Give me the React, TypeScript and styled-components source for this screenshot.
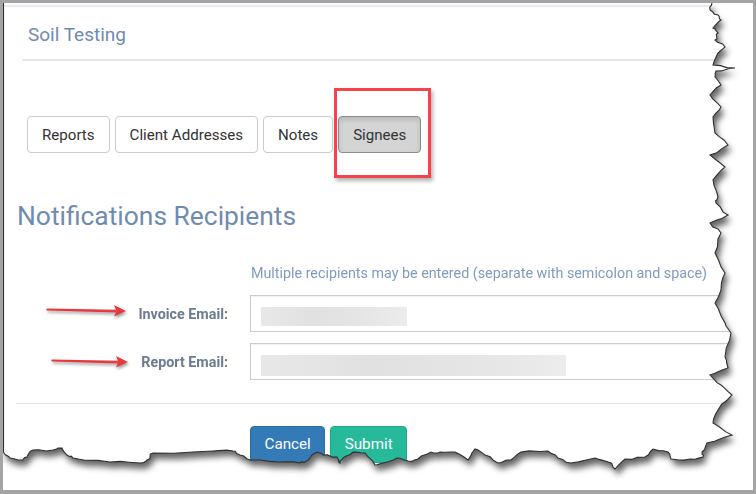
import React from "react";
import styled, { createGlobalStyle } from "styled-components";

// torn edge of the snapshot, in page coordinates (frame border already removed)
const EDGE_RAW: [number, number][] = [
  [712, 3], [710, 10], [718, 15], [721, 20], [713, 28], [718, 33], [715, 40],
  [725, 47], [718, 53], [713, 65], [735, 68], [716, 71], [715, 77], [721, 85],
  [710, 95], [721, 107], [713, 117], [715, 133], [728, 145], [710, 155],
  [725, 167], [713, 180], [718, 197], [716, 203], [728, 215], [710, 223],
  [721, 233], [715, 253], [725, 273], [721, 290], [715, 303], [725, 323],
  [731, 333], [725, 357], [728, 368], [710, 375], [721, 385], [732, 395],
  [718, 410], [713, 423], [732, 435], [707, 443], [702, 452], [703, 457],
  [690, 459], [671, 459], [668, 452], [653, 449], [645, 457], [625, 459],
  [615, 469], [611, 463], [595, 458], [571, 463], [558, 458], [548, 451],
  [521, 452], [511, 460], [498, 463], [485, 455], [475, 449], [468, 460],
  [455, 452], [440, 452], [431, 452], [418, 459], [408, 461], [397, 458],
  [383, 463], [375, 465], [365, 453], [353, 452], [343, 458], [340, 463],
  [337, 457], [323, 455], [317, 452], [305, 462], [300, 463], [280, 462],
  [250, 460], [240, 455], [233, 451], [213, 451], [153, 453], [147, 460],
  [140, 463], [110, 462], [73, 458], [67, 455], [62, 448], [53, 450],
  [33, 450], [27, 457], [23, 460], [10, 458], [3, 452],
];

// add a little jitter between the traced points so the edge looks ripped
const jagged = (pts: [number, number][]): [number, number][] => {
  const out: [number, number][] = [];
  let seed = 7;
  const rnd = () => {
    seed = (seed * 9301 + 49297) % 233280;
    return seed / 233280 - 0.5;
  };
  pts.forEach(([x, y], i) => {
    out.push([x - 3, y - 3]);
    const next = pts[i + 1];
    if (!next) return;
    for (let k = 1; k < 3; k++) {
      const t = k / 3;
      out.push([
        x + (next[0] - x) * t - 3 + rnd() * 2.2,
        y + (next[1] - y) * t - 3 + rnd() * 2.2,
      ]);
    }
  });
  return out;
};

const EDGE = jagged(EDGE_RAW);
const CLIP = `polygon(0px 0px, ${EDGE.map(([x, y]) => `${x.toFixed(1)}px ${y.toFixed(1)}px`).join(", ")})`;
const EDGE_LINE = [[0.5, 0] as [number, number], ...[...EDGE].reverse()]
  .map(([x, y]) => `${Math.max(x, 0.5).toFixed(1)},${y.toFixed(1)}`)
  .join(" ");

const GlobalStyle = createGlobalStyle`
  html, body {
    margin: 0;
    padding: 0;
    background: #fff;
  }
  body {
    font-family: Roboto, "Noto Sans", Arial, sans-serif;
  }
`;

const Frame = styled.div`
  position: relative;
  width: 756px;
  height: 494px;
  box-sizing: border-box;
  border: 3px solid #a4a4a4;
  border-bottom-width: 4px;
  background: #fff;
  overflow: hidden;
`;

const Sheet = styled.div`
  width: 750px;
  height: 487px;
  filter: drop-shadow(3px 6px 3px rgba(0, 0, 0, 0.6));
`;

const Page = styled.div`
  width: 100%;
  height: 100%;
  background: linear-gradient(
    to bottom,
    #fff 0 2px,
    #e9eaf2 2px 4px,
    #fff 4px
  );
  clip-path: ${CLIP};
`;

const EdgeLine = styled.svg`
  position: absolute;
  left: 0;
  top: 0;
  width: 750px;
  height: 487px;
  pointer-events: none;
`;

const Header = styled.header`
  margin-left: 19px;
  padding: 20px 0 12px 6px;
  border-bottom: 2px solid #e3e7ed;
`;

const Title = styled.h2`
  margin: 0;
  font-size: 19px;
  font-weight: 400;
  line-height: 24px;
  color: #6f8bb0;
`;

const Tabs = styled.nav`
  display: flex;
  gap: 5px;
  margin-top: 55px;
  padding-left: 24px;
`;

const TabSlot = styled.div`
  position: relative;
`;

const Tab = styled.button<{ $active?: boolean }>`
  height: 37px;
  padding: 0 14px;
  border: 1px solid ${(p) => (p.$active ? "#8c8c8c" : "#cccccc")};
  border-radius: 4px;
  background: ${(p) => (p.$active ? "#d4d4d4" : "#fff")};
  box-shadow: ${(p) => (p.$active ? "inset 0 3px 5px rgba(0,0,0,0.125)" : "none")};
  color: #333;
  font-family: Roboto, Arial, sans-serif;
  font-size: 15.1px;
  line-height: 37px;
`;

const Highlight = styled.div`
  position: absolute;
  left: -4px;
  top: -28px;
  width: 97px;
  height: 90px;
  box-sizing: border-box;
  border: 3px solid #f4434a;
  box-shadow: 2px 3px 4px rgba(0, 0, 0, 0.3);
  pointer-events: none;
`;

const Heading = styled.h1`
  margin: 48px 0 0 14px;
  font-size: 26.4px;
  font-weight: 400;
  line-height: 30px;
  color: #6f8bb0;
`;

const Form = styled.form`
  margin: 32px 0 0 13px;
  width: 740px;
`;

const Row = styled.div<{ $gap?: number }>`
  position: relative;
  display: grid;
  grid-template-columns: 234px 1fr;
  align-items: center;
  margin-top: ${(p) => p.$gap ?? 0}px;
`;

const Hint = styled.p`
  grid-column: 2;
  margin: 0;
  padding-left: 1px;
  font-size: 14.3px;
  line-height: 20px;
  color: #7f9bc0;
  white-space: nowrap;
`;

const Label = styled.label`
  padding-right: 22px;
  text-align: right;
  font-size: 14.3px;
  font-weight: 700;
  color: #6c7b91;
`;

const Field = styled.div`
  height: 37px;
  box-sizing: border-box;
  padding: 11px 10px 0;
  border: 1px solid #cccccc;
  box-shadow: inset 0 1px 1px rgba(0, 0, 0, 0.06);
  background: #fff;
`;

const Redacted = styled.div<{ $w: number; $h: number }>`
  width: ${(p) => p.$w}px;
  height: ${(p) => p.$h}px;
  background: linear-gradient(
    to right,
    #e8e8e8 0%,
    #e1e1e1 35%,
    #e5e5e5 70%,
    #ececec 100%
  );
`;

const Arrow = styled.svg<{ $left: number; $top: number }>`
  position: absolute;
  left: ${(p) => p.$left}px;
  top: ${(p) => p.$top}px;
  width: 90px;
  height: 18px;
  overflow: visible;
  filter: drop-shadow(1px 2px 1.5px rgba(0, 0, 0, 0.4));
`;

const Footer = styled.div`
  margin-top: 23px;
  padding: 22px 0 0 234px;
  border-top: 1px solid #e5e5e5;
  display: flex;
  gap: 5px;
`;

const Action = styled.button<{ $tone: "primary" | "success" }>`
  height: 37px;
  padding: 0 13.5px;
  border-radius: 4px;
  border: 1px solid ${(p) => (p.$tone === "primary" ? "#2e6da4" : "#1fa98b")};
  background: ${(p) => (p.$tone === "primary" ? "#337ab7" : "#26b99a")};
  color: #fff;
  font-family: Roboto, Arial, sans-serif;
  font-size: 15.2px;
  line-height: 35px;
`;

const RedArrow = ({ left, top, length }: { left: number; top: number; length: number }) => (
  <Arrow $left={left} $top={top} viewBox="0 0 90 18">
    <path
      d={`M3 7.2 L${length - 10} 8.4 L${length - 10} 9.8 L3 7.8 Z`}
      fill="#e8383d"
      stroke="#e8383d"
      strokeWidth="1.2"
      strokeLinejoin="round"
    />
    <path
      d={`M${length - 12} 3 L${length} 9 L${length - 12} 14.6 L${length - 9.5} 9 Z`}
      fill="#e8383d"
    />
  </Arrow>
);

export default function App() {
  return (
    <>
      <GlobalStyle />
      <Frame>
        <Sheet>
          <Page>
            <Header>
              <Title>Soil Testing</Title>
            </Header>

            <Tabs>
              <TabSlot>
                <Tab>Reports</Tab>
              </TabSlot>
              <TabSlot>
                <Tab>Client Addresses</Tab>
              </TabSlot>
              <TabSlot>
                <Tab>Notes</Tab>
              </TabSlot>
              <TabSlot>
                <Tab $active>Signees</Tab>
                <Highlight />
              </TabSlot>
            </Tabs>

            <Heading>Notifications Recipients</Heading>

            <Form>
              <Row>
                <Hint>Multiple recipients may be entered (separate with semicolon and space)</Hint>
              </Row>
              <Row $gap={12}>
                <RedArrow left={28} top={7} length={82} />
                <Label>Invoice Email:</Label>
                <Field>
                  <Redacted $w={146} $h={19} />
                </Field>
              </Row>
              <Row $gap={11}>
                <RedArrow left={33} top={10} length={79} />
                <Label>Report Email:</Label>
                <Field>
                  <Redacted $w={305} $h={21} />
                </Field>
              </Row>
              <Footer>
                <Action type="button" $tone="primary">Cancel</Action>
                <Action type="button" $tone="success">Submit</Action>
              </Footer>
            </Form>
          </Page>
        </Sheet>
        <EdgeLine viewBox="0 0 750 487">
          <polyline points={EDGE_LINE} fill="none" stroke="#2f2f2f" strokeWidth="1.1" />
        </EdgeLine>
      </Frame>
    </>
  );
}
